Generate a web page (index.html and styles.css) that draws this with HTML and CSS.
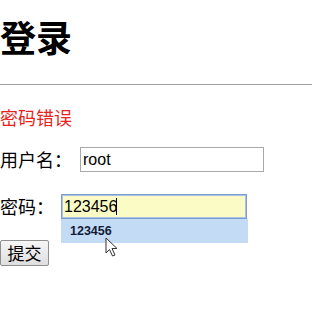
FILE: index.html
```html
<!DOCTYPE html>
<html lang="zh-CN">
<head>
  <meta charset="UTF-8">
  <meta name="viewport" content="width=device-width, initial-scale=1.0">
  <title>登录</title>
  <link rel="stylesheet" href="styles.css">
</head>
<body>
  <h1>登录</h1>
  <hr>
  <div class="error">密码错误</div>
  <form class="login">
    <div class="row">
      <label for="username">用户名：</label>
      <input type="text" id="username" class="user" value="root">
    </div>
    <div class="row pass-row">
      <label for="password">密码：</label>
      <div class="field">
        <input type="text" id="password" class="pass" value="123456">
        <span class="caret"></span>
        <div class="suggest">123456</div>
        <svg class="pointer" width="14" height="21" viewBox="0 0 14 21">
          <path d="M1 1 L1 16 L4.5 12.5 L7.5 19 L10 18 L7 11.5 L12 11.5 Z" fill="#fff" stroke="#333" stroke-width="1" stroke-linejoin="round"/>
        </svg>
      </div>
    </div>
    <button type="button" class="submit">提交</button>
  </form>
</body>
</html>
```

FILE: styles.css
```css
body {
  margin: 0;
  font-family: "Liberation Sans", "Noto Sans CJK SC", sans-serif;
  color: #000;
  background: #fff;
}
h1 {
  font-family: "Noto Sans CJK SC", sans-serif;
  font-size: 36px;
  font-weight: bold;
  line-height: 44px;
  margin: 0;
  padding-top: 14px;
}
hr {
  border: 0;
  border-top: 1px solid #a0a0a0;
  height: 0;
  margin: 26px 0 0;
}
.error {
  font-family: "Noto Sans CJK SC", sans-serif;
  color: #e8231b;
  font-size: 18px;
  line-height: 24px;
  margin-top: 20px;
}
.login {
  margin: 0;
}
.row {
  display: flex;
  align-items: center;
  gap: 7px;
  margin-top: 18px;
}
.pass-row {
  margin-top: 22px;
}
label {
  font-family: "Noto Sans CJK SC", sans-serif;
  font-size: 18px;
  line-height: 25px;
}
input {
  font-family: "Liberation Sans", sans-serif;
  font-size: 16px;
  height: 25px;
  box-sizing: border-box;
  padding: 0 2px;
  margin: 0;
  outline: none;
  color: #000;
}
.user {
  width: 184px;
  margin-left: 1px;
  border: 1px solid #a9a9a9;
  background: #fff;
}
.field {
  position: relative;
}
.pass {
  width: 186px;
  border: 1px solid #7e9ccf;
  box-shadow: inset 0 0 0 1px #aac0e4;
  background: #fbfbc6;
}
.caret {
  position: absolute;
  left: 55px;
  top: 4px;
  width: 1px;
  height: 17px;
  background: #000;
}
.suggest {
  position: absolute;
  left: 0;
  top: 25px;
  width: 187px;
  height: 24px;
  box-sizing: border-box;
  padding-left: 9px;
  background: #c3dbf4;
  font-size: 12.5px;
  font-weight: bold;
  line-height: 24px;
  color: #141b3a;
}
.pointer {
  position: absolute;
  left: 44px;
  top: 43px;
}
.submit {
  display: block;
  margin-top: 21px;
  height: 26px;
  width: 49px;
  padding: 0;
  font-family: "Noto Sans CJK SC", sans-serif;
  font-size: 17px;
  line-height: 22px;
  color: #000;
  border: 1px solid #8f8f8f;
  border-radius: 2px;
  background: linear-gradient(#f6f6f6, #dedede);
}
```
